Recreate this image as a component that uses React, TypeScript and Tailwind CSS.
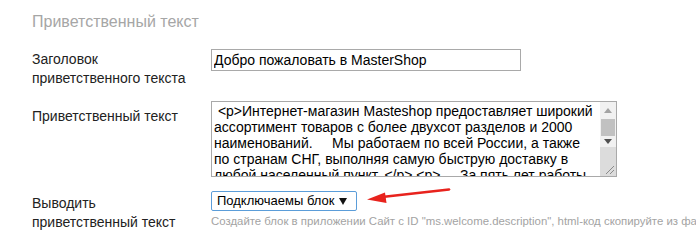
import React from 'react';

const welcomeText =
  ' <p>Интернет-магазин Masteshop предоставляет широкий ассортимент товаров с более двухсот разделов и 2000 наименований.     Мы работаем по всей России, а также по странам СНГ, выполняя самую быструю доставку в любой населенный пункт. </p> <p>     За пять лет работы мы завоевали доверие тысяч покупателей. </p>';

const App: React.FC = () => {
  return (
    <div className="relative w-[696px] h-[246px] overflow-hidden bg-white font-['Liberation_Sans',Arial,sans-serif] text-[14px] text-[#222]">
      <div className="pl-[32px] pt-[12px]">
        <h3 className="text-[16px] leading-[20px] text-[#a6a6a6] font-normal">Приветственный текст</h3>

        <div className="flex mt-[17px]">
          <label className="w-[179px] shrink-0 pt-[1px] leading-[19px]">
            Заголовок
            <br />
            приветственного текста
          </label>
          <input
            type="text"
            defaultValue="Добро пожаловать в MasterShop"
            className="w-[310px] h-[22px] border border-[#a9a9a9] px-[2px] text-[14px] leading-[16px] text-black outline-none"
          />
        </div>

        <div className="flex mt-[13px]">
          <label className="w-[179px] shrink-0 pt-[6px] leading-[19px]">Приветственный текст</label>
          <div className="flex w-[406px] h-[76px] border border-[#a9a9a9]">
            <textarea
              defaultValue={welcomeText}
              className="flex-1 h-full px-[2px] py-[1px] text-[14px] leading-[16px] text-black outline-none overflow-hidden resize-none"
            />
            <div className="w-[16px] shrink-0 flex flex-col bg-[#f1f1f1]">
              <div className="h-[17px] flex items-center justify-center">
                <svg width="8" height="5" viewBox="0 0 8 5"><polygon points="4,0 8,5 0,5" fill="#a3a3a3" /></svg>
              </div>
              <div className="mx-[1px] h-[17px] bg-[#c1c1c1]" />
              <div className="h-[11px] flex items-center justify-center">
                <svg width="8" height="5" viewBox="0 0 8 5"><polygon points="0,0 8,0 4,5" fill="#505050" /></svg>
              </div>
              <div className="flex-1 bg-[#dcdcdc] flex items-end justify-end p-[2px]">
                <svg width="9" height="9" viewBox="0 0 9 9">
                  <line x1="1" y1="9" x2="9" y2="1" stroke="#8a8a8a" strokeWidth="1" />
                  <line x1="5" y1="9" x2="9" y2="5" stroke="#8a8a8a" strokeWidth="1" />
                </svg>
              </div>
            </div>
          </div>
        </div>

        <div className="flex mt-[14px]">
          <label className="w-[179px] shrink-0 pt-[3px] leading-[19px]">
            Выводить
            <br />
            приветственный текст
          </label>
          <div className="w-[406px]">
            <div className="flex items-center w-[146px] h-[20px] border border-[#5b9dd9] rounded-[2px] pl-[5px] pr-[9px] text-[13px] text-black leading-[16px] whitespace-nowrap">
              <span className="flex-1">Подключаемы блок</span>
              <svg width="8" height="7" viewBox="0 0 8 7"><polygon points="0,0 8,0 4,7" fill="#111" /></svg>
            </div>
            <p className="mt-[3px] text-[11.4px] leading-[14px] text-[#a3a3a3] whitespace-nowrap">
              Создайте блок в приложении Сайт с ID "ms.welcome.description", html-код скопируйте из файла
            </p>
          </div>
        </div>
      </div>

      <svg className="absolute left-[360px] top-[184px]" width="96" height="24" viewBox="0 0 96 24">
        <line x1="22" y1="13" x2="89" y2="5.5" stroke="#e8231d" strokeWidth="2.5" strokeLinecap="round" />
        <polygon points="7,15.5 25,8.5 26.5,19" fill="#e8231d" />
      </svg>
    </div>
  );
};

export default App;
